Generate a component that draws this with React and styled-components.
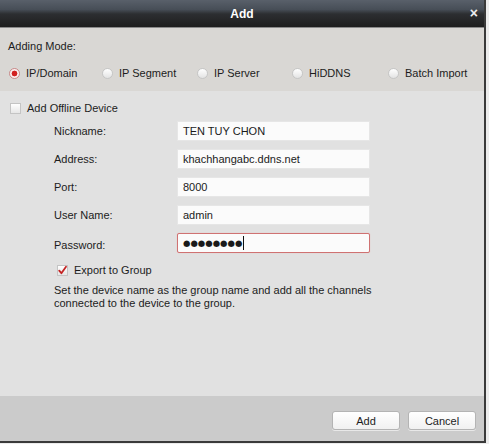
import React from "react";
import styled, { createGlobalStyle } from "styled-components";

const Global = createGlobalStyle`
  html, body { margin: 0; padding: 0; background: #ececec; }
  body { font-family: "Liberation Sans", Arial, sans-serif; font-size: 11px; color: #1c1c1c; }
`;

const Page = styled.div`
  width: 489px;
  height: 444px;
  overflow: hidden;
  background: #ececec;
`;

const Dialog = styled.div`
  width: 484px;
  height: 441px;
  display: flex;
  flex-direction: column;
  border-right: 2px solid #3a3a3a;
  border-bottom: 2px solid #3a3a3a;
  box-sizing: content-box;
`;

const TitleBar = styled.div`
  height: 27px;
  flex: none;
  position: relative;
  display: flex;
  align-items: center;
  justify-content: center;
  background: linear-gradient(to bottom, #59606a 0%, #474e57 35%, #2c2e31 52%, #1e1e1e 100%);
  border-bottom: 1px solid #8a8a8a;
  color: #fff;
  font-weight: bold;
  font-size: 12px;
`;

const Close = styled.span`
  position: absolute;
  right: 6px;
  top: 5px;
  font-size: 14px;
  font-weight: bold;
  color: #eee;
`;

const ModeSection = styled.div`
  background: #d9d7d4;
  height: 63px;
  flex: none;
  padding: 11px 0 0 8px;
  box-sizing: border-box;
`;

const ModeTitle = styled.div`
  height: 14px;
  line-height: 14px;
`;

const RadioRow = styled.div`
  display: grid;
  grid-template-columns: 93px 95px 95px 96px 90px;
  margin-top: 13px;
  padding-left: 1px;
`;

const RadioItem = styled.label`
  display: flex;
  align-items: center;
  gap: 6px;
  height: 14px;
`;

const RadioCircle = styled.span`
  width: 11px;
  height: 11px;
  border-radius: 50%;
  box-sizing: border-box;
  border: 1px solid ${p => (p.$on ? "#c98a8a" : "#c6c6c6")};
  background: ${p =>
    p.$on
      ? "radial-gradient(circle, #d22020 0 2.6px, #fbeeee 3.2px)"
      : "linear-gradient(#ffffff, #e3e3e3)"};
  flex: none;
`;

const MainSection = styled.div`
  background: #e1e1e1;
  flex: 1;
  padding: 10px 0 0 10px;
  box-sizing: border-box;
`;

const CheckRow = styled.label`
  display: flex;
  align-items: center;
  gap: 6px;
  height: 14px;
  margin-left: ${p => p.$indent || 0}px;
`;

const CheckBox = styled.span`
  width: 11px;
  height: 11px;
  box-sizing: border-box;
  border: 1px solid #c4c4c4;
  background: linear-gradient(#ffffff, #e6e6e6);
  position: relative;
  flex: none;
`;

const Form = styled.div`
  display: flex;
  flex-direction: column;
  gap: 8px;
  margin-top: 6px;
  padding-left: 44px;
`;

const FieldRow = styled.div`
  display: flex;
  align-items: center;
  height: 20px;
`;

const Label = styled.span`
  width: 123px;
  flex: none;
  padding-top: ${p => (p.$low ? 4 : 0)}px;
`;

const Input = styled.div`
  width: 193px;
  height: 20px;
  box-sizing: border-box;
  background: #fbfbfb;
  border: 1px solid ${p => (p.$active ? "#cf7272" : "#e6e6e6")};
  border-radius: ${p => (p.$active ? 2 : 0)}px;
  box-shadow: ${p => (p.$active ? "0 0 1px #e9a0a0" : "none")};
  padding: 0 5px;
  display: flex;
  align-items: center;
  color: #1a1a1a;
  white-space: nowrap;
`;

const Dots = styled.span`
  font-size: 8.5px;
  letter-spacing: 0;
  font-family: "DejaVu Sans", sans-serif;
`;

const Caret = styled.span`
  display: inline-block;
  width: 1px;
  height: 14px;
  background: #111;
  margin-left: 1px;
`;

const ExportBlock = styled.div`
  margin-top: 10px;
`;

const Desc = styled.p`
  margin: 7px 0 0 44px;
  line-height: 13px;
  width: 330px;
`;

const Footer = styled.div`
  background: #cbcbcb;
  height: 45px;
  flex: none;
  display: flex;
  justify-content: flex-end;
  align-items: flex-start;
  gap: 8px;
  padding: 15px 8px 0 0;
  box-sizing: border-box;
`;

const Button = styled.button`
  width: 68px;
  height: 19px;
  padding: 0;
  font-family: "Liberation Sans", Arial, sans-serif;
  font-size: 11px;
  color: #1c1c1c;
  background: linear-gradient(#ffffff, #f1f1f1);
  border: 1px solid #b4b4b4;
  border-radius: 3px;
  box-shadow: 0 1px 0 #e8e8e8;
`;

const Check = () => (
  <svg width="11" height="11" viewBox="0 0 11 11" style={{ position: "absolute", left: -1, top: -1 }}>
    <path d="M2.2 5.6 L4.4 8.2 L9 1.8" fill="none" stroke="#c42424" strokeWidth="1.8" strokeLinecap="round" strokeLinejoin="round" />
  </svg>
);

const modes = ["IP/Domain", "IP Segment", "IP Server", "HiDDNS", "Batch Import"];

const fields = [
  { label: "Nickname:", value: "TEN TUY CHON" },
  { label: "Address:", value: "khachhangabc.ddns.net" },
  { label: "Port:", value: "8000" },
  { label: "User Name:", value: "admin" },
];

export default function App() {
  return (
    <Page>
      <Global />
      <Dialog>
        <TitleBar>
          Add
          <Close>×</Close>
        </TitleBar>
        <ModeSection>
          <ModeTitle>Adding Mode:</ModeTitle>
          <RadioRow>
            {modes.map((m, i) => (
              <RadioItem key={m}>
                <RadioCircle $on={i === 0} />
                {m}
              </RadioItem>
            ))}
          </RadioRow>
        </ModeSection>
        <MainSection>
          <CheckRow>
            <CheckBox />
            Add Offline Device
          </CheckRow>
          <Form>
            {fields.map(f => (
              <FieldRow key={f.label}>
                <Label>{f.label}</Label>
                <Input>{f.value}</Input>
              </FieldRow>
            ))}
            <FieldRow>
              <Label $low>Password:</Label>
              <Input $active>
                <Dots>●●●●●●●●</Dots>
                <Caret />
              </Input>
            </FieldRow>
          </Form>
          <ExportBlock>
            <CheckRow $indent={47}>
              <CheckBox>
                <Check />
              </CheckBox>
              Export to Group
            </CheckRow>
            <Desc>
              Set the device name as the group name and add all the channels connected to the device to the group.
            </Desc>
          </ExportBlock>
        </MainSection>
        <Footer>
          <Button>Add</Button>
          <Button>Cancel</Button>
        </Footer>
      </Dialog>
    </Page>
  );
}
